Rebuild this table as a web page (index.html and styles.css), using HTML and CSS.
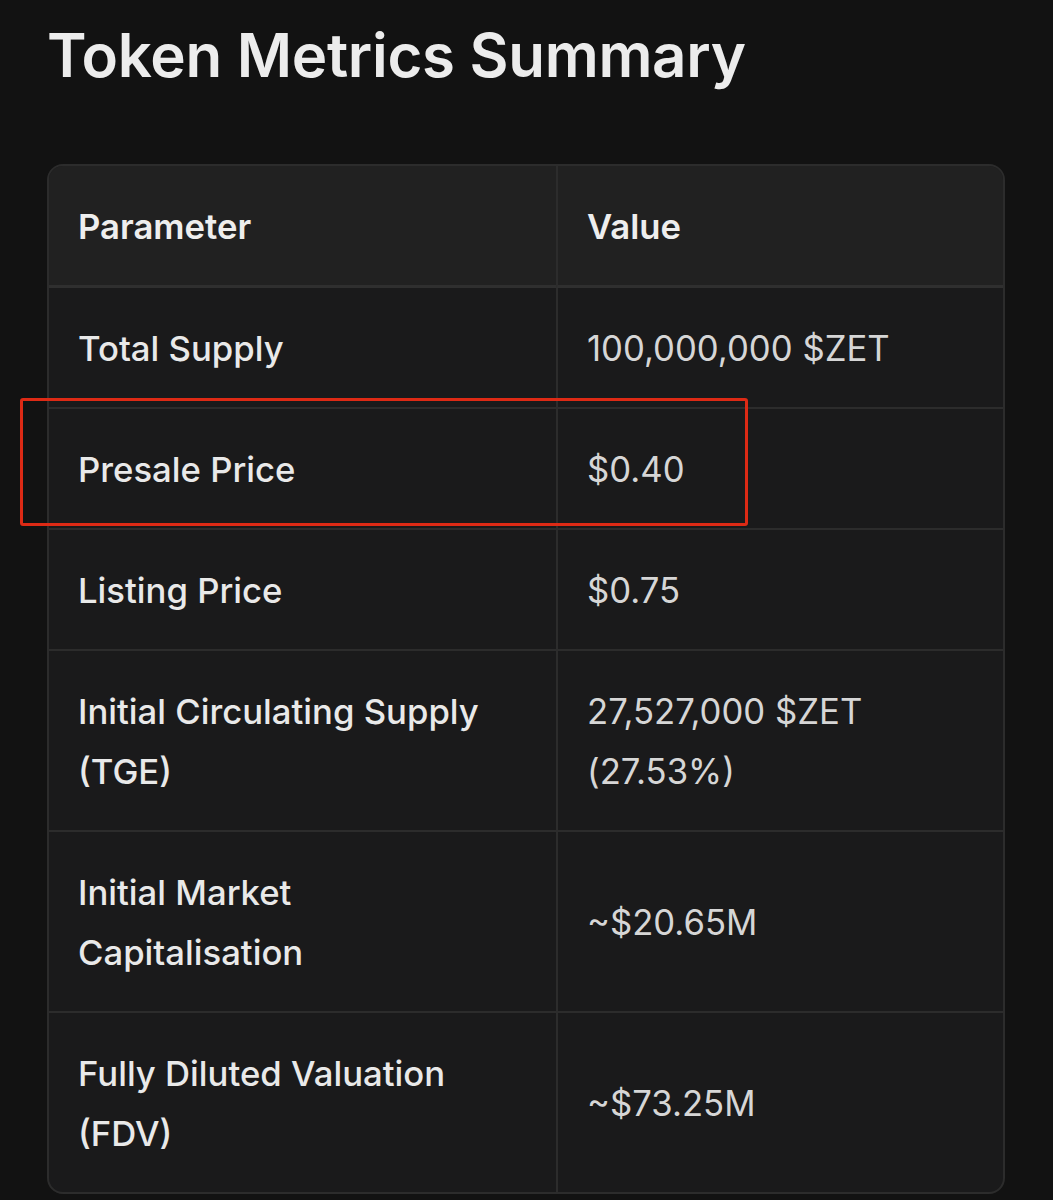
FILE: index.html
```html
<!DOCTYPE html>
<html>
<head>
<meta charset="utf-8">
<link rel="stylesheet" href="styles.css">
</head>
<body>
<div class="page">
  <h1 class="title">Token Metrics Summary</h1>
  <div class="table-wrap">
    <table class="metrics">
      <thead>
        <tr><th class="col-param">Parameter</th><th class="col-value">Value</th></tr>
      </thead>
      <tbody>
        <tr><td class="param">Total Supply</td><td class="value">100,000,000 $ZET</td></tr>
        <tr><td class="param">Presale Price</td><td class="value">$0.40</td></tr>
        <tr><td class="param">Listing Price</td><td class="value">$0.75</td></tr>
        <tr><td class="param">Initial Circulating Supply (TGE)</td><td class="value">27,527,000 $ZET (27.53%)</td></tr>
        <tr><td class="param">Initial Market Capitalisation</td><td class="value">~$20.65M</td></tr>
        <tr><td class="param">Fully Diluted Valuation (FDV)</td><td class="value">~$73.25M</td></tr>
      </tbody>
    </table>
    <div class="highlight"></div>
  </div>
</div>
</body>
</html>
```

FILE: styles.css
```css
html, body {
  margin: 0;
  padding: 0;
  background: #121212;
}
.page {
  width: 1053px;
  height: 1200px;
  overflow: hidden;
  font-family: "Inter", "Noto Sans", sans-serif;
  color: #ececec;
  padding: 0 48px 0 47px;
  box-sizing: border-box;
}
.title {
  margin: 0;
  padding-top: 18px;
  font-size: 60px;
  font-weight: 600;
  line-height: 74px;
  letter-spacing: -0.3px;
  color: #ececec;
}
.table-wrap {
  position: relative;
  margin-top: 72px;
  width: 958px;
}
.metrics {
  width: 958px;
  border-collapse: separate;
  border-spacing: 0;
  border: 2px solid #2c2c2c;
  border-radius: 16px;
  overflow: hidden;
  table-layout: fixed;
  background: #1a1a1b;
}
.metrics th, .metrics td {
  box-sizing: border-box;
  text-align: left;
  vertical-align: middle;
  padding: 30px 30px 29px 29px;
  font-size: 34.7px;
  line-height: 60px;
}
.col-param { width: 507px; }
.metrics th {
  background: #212121;
  font-weight: 600;
  color: #eeeeee;
  border-bottom: 3px solid #2f2f2f;
}
.metrics td {
  border-top: 2px solid #2c2c2c;
}
.metrics tbody tr:first-child td {
  border-top: none;
}
.metrics th + th, .metrics td + td {
  border-left: 2px solid #2c2c2c;
}
.metrics td.param {
  padding-right: 48px;
  font-weight: 500;
  color: #e9e9e9;
}
.value {
  font-weight: 400;
  color: #d6d6d6;
}
.highlight {
  position: absolute;
  left: -27px;
  top: 234px;
  width: 722px;
  height: 122px;
  border: 3px solid #dd2a15;
  border-radius: 3px;
}
```
